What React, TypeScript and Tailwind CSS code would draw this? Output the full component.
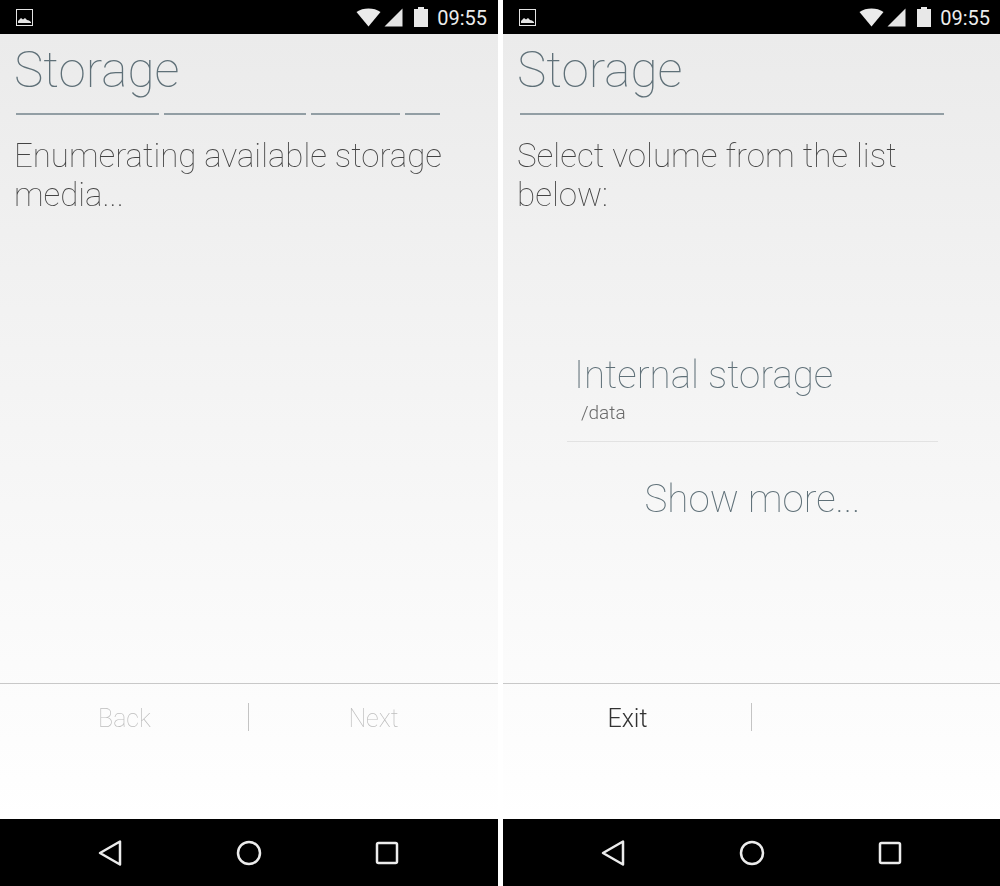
const StatusBar = () => (
  <div className="flex h-[34px] items-center justify-between bg-black pl-4 pr-[11px]">
    {/* gallery notification */}
    <svg width="17" height="17" viewBox="0 0 17 17">
      <rect x="0.5" y="0.5" width="16" height="16" fill="none" stroke="#e4e4e4" strokeWidth="1" />
      <path d="M2 14V12L5 9L7 10.5L9 9L11 11L13 11.5L15 13V14Z" fill="#e4e4e4" />
    </svg>
    <div className="flex items-center">
      <svg width="25" height="19" viewBox="0 0 25 19" className="mr-[3px]">
        <path d="M0.5 4C4 1.5 8 0.5 12.5 0.5C17 0.5 21 1.5 24.500 4L12.500 18.500Z" fill="#ebebeb" />
      </svg>
      <svg width="19" height="19" viewBox="0 0 19 19" className="mr-[11px]">
        <path d="M18.500 0.500V18.500H0.500Z" fill="#e4e4e4" />
      </svg>
      <svg width="14" height="20" viewBox="0 0 14 20" className="mr-[9px]">
        <path d="M4 0H10V2H14V20H0V2H4Z" fill="#e8e8e8" />
      </svg>
      <span className="pt-[2px] font-['Roboto',sans-serif] text-[20px] leading-none text-[#ececec]">09:55</span>
    </div>
  </div>
);

const NavBar = () => (
  <div className="flex h-[67px] items-center justify-between bg-black pl-[98px] pr-[99px]">
    <svg width="24" height="26" viewBox="0 0 24 26">
      <path d="M22 1.500V24.500L2 13Z" fill="none" stroke="#ececec" strokeWidth="2.500" strokeLinejoin="round" />
    </svg>
    <svg width="26" height="26" viewBox="0 0 26 26">
      <circle cx="13" cy="13" r="11" fill="none" stroke="#ececec" strokeWidth="2.500" />
    </svg>
    <svg width="24" height="24" viewBox="0 0 24 24">
      <rect x="2" y="2" width="20" height="20" rx="1.500" fill="none" stroke="#ececec" strokeWidth="2.500" />
    </svg>
  </div>
);

const Footer = ({ left, right, muted }: { left: string; right?: string; muted?: boolean }) => (
  <div className="flex h-[136px] border-t border-[#c8c8c8] pt-[19px]">
    <div className={`w-[248px] pl-px pt-px text-center text-[25px] leading-[30px] will-change-transform ${muted ? "font-thin text-[#bdbdbd]" : "text-[#333]"}`}>
      {left}
    </div>
    <div className="h-[28px] w-px bg-[#c4c4c4]" />
    <div className="flex-1 pt-px text-center text-[25px] leading-[30px] font-thin text-[#bdbdbd] will-change-transform">{right}</div>
  </div>
);

const Title = ({ segments, inset }: { segments: number[]; inset: string }) => (
  <>
    <h1 className="mt-[6px] h-[60px] pl-[14px] text-[49.5px] leading-[60px] font-thin text-[#5f7078] will-change-transform">Storage</h1>
    <div className={`mt-[13px] flex gap-[5px] ${inset}`}>
      {segments.map((w) => (
        <div key={w} className="h-[2px] bg-[#929ea4]" style={{ width: w }} />
      ))}
    </div>
  </>
);

const Screen = ({ children }: { children: React.ReactNode }) => (
  <div className="flex h-[886px] w-[498px] shrink-0 flex-col">
    <StatusBar />
    <div className="flex flex-1 flex-col bg-gradient-to-b from-[#ebebeb] to-white font-['Roboto',sans-serif] font-light">
      {children}
    </div>
    <NavBar />
  </div>
);

export default function App() {
  return (
    <div className="flex w-[1000px] gap-[5px] overflow-hidden bg-white">
      <Screen>
        <div className="flex-1">
          <Title segments={[143, 142, 89, 35]} inset="pl-[16px]" />
          <p className="mt-[21px] w-[470px] pl-[14px] text-[33px] leading-[39px] font-thin text-[#444] will-change-transform">
            Enumerating available storage media...
          </p>
        </div>
        <Footer left="Back" right="Next" muted />
      </Screen>
      <Screen>
        <div className="flex-1">
          <Title segments={[424]} inset="pl-[17px]" />
          <p className="mt-[21px] w-[430px] pl-[14px] text-[33.2px] leading-[39px] font-thin text-[#444] will-change-transform">
            Select volume from the list below:
          </p>
          <div className="mt-[138px] ml-[64px] w-[371px] border-b border-[#e2e2e2] pb-[16px]">
            <div className="pl-[7px] text-[38.5px] leading-[46px] font-thin text-[#5f7078] will-change-transform">Internal storage</div>
            <div className="pl-[14px] pt-[3px] text-[19px] leading-[24px] text-[#6a6a6a] will-change-transform">/data</div>
          </div>
          <div className="mt-[34px] ml-[64px] w-[371px] text-center text-[38.5px] leading-[46px] font-thin text-[#5f7078] will-change-transform">
            Show more...
          </div>
        </div>
        <Footer left="Exit" />
      </Screen>
    </div>
  );
}
